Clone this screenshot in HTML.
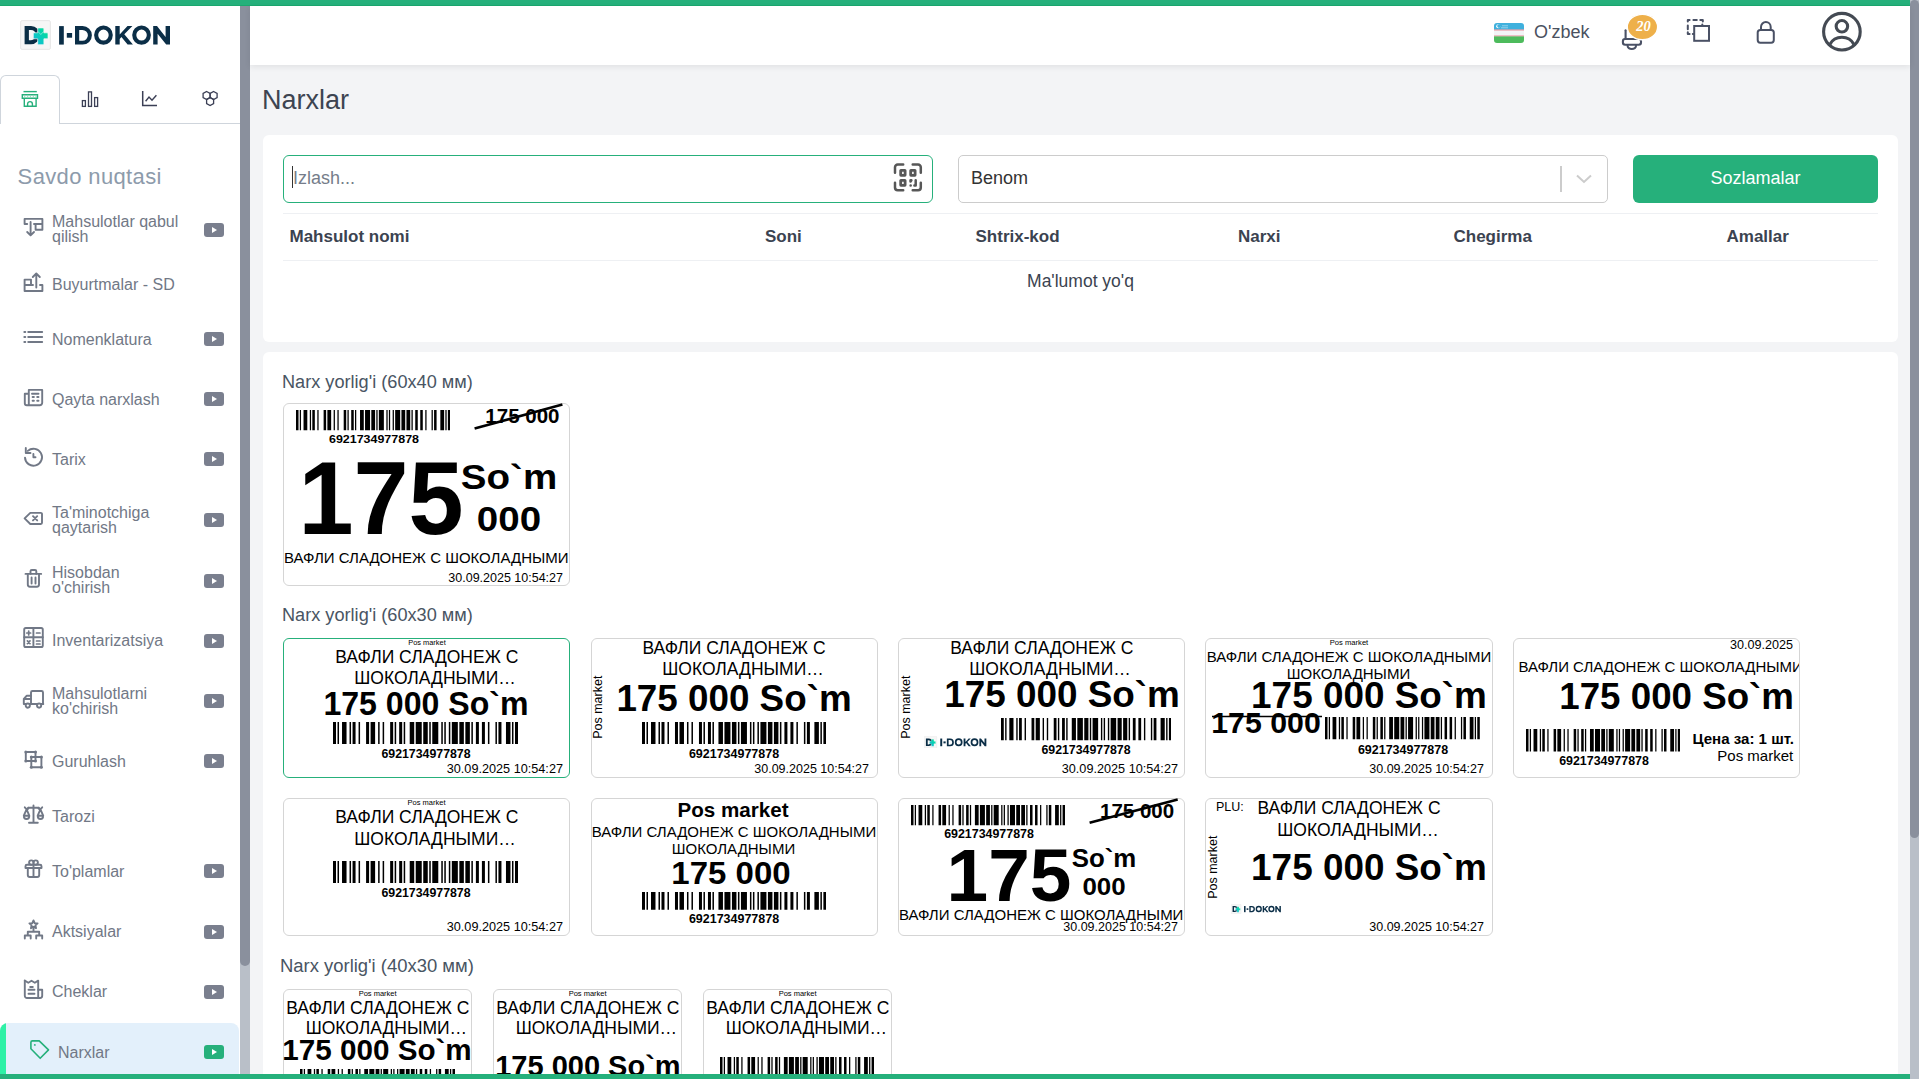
<!DOCTYPE html>
<html><head><meta charset="utf-8">
<style>
*{box-sizing:border-box;margin:0;padding:0}
html,body{width:1919px;height:1079px;overflow:hidden;background:#f3f4f6;font-family:"Liberation Sans",sans-serif}
.a{position:absolute}
.t{position:absolute;white-space:nowrap;line-height:1}
#topbar{left:0;top:0;width:1910px;height:6px;background:#25b07b;border-bottom:1px solid #1aa86e}
#botbar{left:0;top:1074px;width:1910px;height:5px;background:#25b07b;z-index:20}
#side{left:0;top:6px;width:240px;height:1073px;background:#fff;overflow:hidden}
#sscroll{left:240px;top:6px;width:10px;height:1073px;background:#b9bfc8}
#sthumb{left:240px;top:6px;width:10px;height:960px;background:#8a909d;border-radius:0 0 5px 5px}
#pscroll{left:1910px;top:0;width:9px;height:1079px;background:#b9bfc8}
#pthumb{left:1910px;top:0;width:9px;height:838px;background:#8a909d;border-radius:5px}
#header{left:250px;top:6px;width:1660px;height:59px;background:#fff;box-shadow:0 2px 6px rgba(0,0,0,.08);z-index:5}
.mi{position:absolute;left:0;width:240px;height:0}
.mi .ic{position:absolute;left:22px;width:22px;height:22px;top:-11px}
.mi .tx{position:absolute;left:52px;font-size:16px;line-height:15px;color:#717886;white-space:nowrap}
.mi .vd{position:absolute;left:204px;top:-7px;width:20px;height:14px;background:#7a7f8e;border-radius:3px}
.mi .vd:after{content:"";position:absolute;left:8px;top:4px;border-left:5px solid #fff;border-top:3px solid transparent;border-bottom:3px solid transparent}
.th{position:absolute;top:228px;font-size:17px;font-weight:700;color:#3b4350;white-space:nowrap;line-height:17px}

.stx{left:52px;font-size:16px;line-height:15px;color:#717886}
.sic{left:20px;width:28px;height:28px;fill:none;stroke:#717886;stroke-width:1.9;stroke-linecap:round;stroke-linejoin:round;z-index:2}
.vd{left:204px;width:20px;height:14px;background:#7a7f8e;border-radius:3px;z-index:2}
.vd:after{content:"";position:absolute;left:8px;top:4px;border-left:5px solid #fff;border-top:3px solid transparent;border-bottom:3px solid transparent}
.stx{z-index:2}
.tabic{width:18px;height:18px;fill:none;stroke:#3d4451;stroke-width:1.8;stroke-linecap:round;stroke-linejoin:round;z-index:2}

.lb{border-radius:6px;pointer-events:none}
.sect{font-size:18px;color:#495563}
#labels .t{color:#000}
#labels .t.sect{color:#495563}
</style></head><body>
<div id="topbar" class="a"></div>
<div id="botbar" class="a"></div>

<!-- SIDEBAR -->
<div id="side" class="a"></div>
<svg class="a" style="left:20px;top:20px;z-index:3" width="31" height="30" viewBox="0 0 31 30">
 <defs><linearGradient id="lg" x1="0" y1="1" x2="1" y2="0"><stop offset="0" stop-color="#0fb8e0"/><stop offset="1" stop-color="#05e391"/></linearGradient></defs>
 <rect x="0.6" y="0.6" width="29.8" height="28.8" rx="1.5" fill="#f6f6f6" stroke="#e4e4e4" stroke-width="0.9"/>
 <path d="M4.6 6H11A9.1 9.1 0 0 1 11 24.2H4.6z M8.9 10V20.2H11A5.1 5.1 0 0 0 11 10z" fill="#0a2d45" fill-rule="evenodd"/>
 <path d="M18.6 7.9H23a.9.9 0 0 1 .9.9V12.8H27.1a.9.9 0 0 1 .9.9V17.9a.9.9 0 0 1-.9.9H23.9V23.8a.9.9 0 0 1-.9.9H18.6a.9.9 0 0 1-.9-.9V18.8H14.2a.9.9 0 0 1-.9-.9V13.7a.9.9 0 0 1 .9-.9H17.7V8.8a.9.9 0 0 1 .9-.9z" fill="url(#lg)" stroke="#f6f6f6" stroke-width="0.7"/>
 <path d="M18 11.5l2.8 3 2.8-3" fill="none" stroke="#e8fff6" stroke-width="0.6" opacity=".8"/>
</svg>
<svg class="a" style="left:0;top:0;z-index:3" width="180" height="60" viewBox="0 0 180 60">
 <g fill="#0b2e47" fill-rule="evenodd">
  <rect x="59.1" y="26.1" width="4.7" height="18.5"/>
  <rect x="66.8" y="33" width="5.3" height="4.7"/>
  <path d="M75 26.1H82.6A9.3 9.25 0 0 1 82.6 44.6H75z M79.2 29.9V40.8H82.4A5.5 5.45 0 0 0 82.4 29.9z"/>
  <path d="M103.45 25.5a9.35 9.6 0 1 1 0 19.2a9.35 9.6 0 1 1 0-19.2z M103.45 29.6a5.25 5.5 0 1 0 0 11a5.25 5.5 0 1 0 0-11z"/>
  <path d="M115.3 26.1H119.7V34.6L127.5 26.1H132.4L124.3 34.3L132.9 44.6H127.6L121.4 37.1L119.7 38.9V44.6H115.3z"/>
  <path d="M141.55 25.5a9.35 9.6 0 1 1 0 19.2a9.35 9.6 0 1 1 0-19.2z M141.55 29.6a5.25 5.5 0 1 0 0 11a5.25 5.5 0 1 0 0-11z"/>
  <path d="M153.2 26.1H157L165.6 37V26.1H170V44.6H166.2L157.6 33.7V44.6H153.2z"/>
 </g>
</svg>
<!-- tabs -->
<div class="a" style="left:0;top:75px;width:60px;height:49px;border:1px solid #cfd5dc;border-bottom:none;border-radius:6px 6px 0 0;background:#fff;z-index:2"></div>
<div class="a" style="left:59px;top:123px;width:181px;height:1px;background:#cfd5dc;z-index:2"></div>
<svg class="a" style="left:0;top:0;z-index:3" width="240" height="124" viewBox="0 0 240 124" fill="none" stroke-linecap="butt" stroke-linejoin="miter">
 <g stroke="#26b07b" stroke-width="1.4">
  <path d="M23.5 91.6H36.8"/>
  <path d="M22.3 94.8H37.5V98.2H22.3z" />
  <path d="M24.7 94.9v3.2M27.7 94.9v3.2M30.4 94.9v3.2M33.3 94.9v3.2M36 94.9v3.2" stroke-width="0.9" stroke="#8fd6b8"/>
  <path d="M24.3 98.3V106.3H36.1V98.3M27.6 106.3V104a2.4 2.4 0 0 1 4.8 0V106.3"/>
 </g>
 <g stroke="#3b3f55" stroke-width="1.3">
  <rect x="82.4" y="100.6" width="3" height="5.8"/>
  <rect x="88.5" y="91.9" width="3" height="14.5"/>
  <rect x="94.6" y="97.6" width="3" height="8.8"/>
 </g>
 <g stroke="#3b3f55" stroke-width="1.5">
  <path d="M142.7 91V105.5H157"/>
  <path d="M145.6 101.2L149 97 152 100.3 156.4 95.2" stroke-width="1.4"/>
 </g>
 <g stroke="#3b3f55" stroke-width="1.3">
  <path d="M206.6 91.5l3.5 2v4l-3.5 2-3.5-2v-4z"/>
  <path d="M213.6 91.5l3.5 2v4l-3.5 2-3.5-2v-4z"/>
  <path d="M210.1 97.5l3.5 2v4l-3.5 2-3.5-2v-4z"/>
 </g>
</svg>
<div class="t" style="left:17.6px;top:166px;font-size:22px;letter-spacing:0.37px;color:#8d9bab;z-index:2">Savdo nuqtasi</div>
<div class="t stx" style="top:214.3px">Mahsulotlar qabul<br>qilish</div>
<div class="a vd" style="top:222.6px"></div>
<div class="t stx" style="top:277.0px">Buyurtmalar - SD</div>
<div class="t stx" style="top:331.7px">Nomenklatura</div>
<div class="a vd" style="top:332.1px"></div>
<div class="t stx" style="top:392.0px">Qayta narxlash</div>
<div class="a vd" style="top:392.4px"></div>
<div class="t stx" style="top:452.0px">Tarix</div>
<div class="a vd" style="top:452.4px"></div>
<div class="t stx" style="top:504.8px">Ta'minotchiga<br>qaytarish</div>
<div class="a vd" style="top:513.1px"></div>
<div class="t stx" style="top:565.3px">Hisobdan<br>o'chirish</div>
<div class="a vd" style="top:573.6px"></div>
<div class="t stx" style="top:633.2px">Inventarizatsiya</div>
<div class="a vd" style="top:633.6px"></div>
<div class="t stx" style="top:685.8px">Mahsulotlarni<br>ko'chirish</div>
<div class="a vd" style="top:694.1px"></div>
<div class="t stx" style="top:753.7px">Guruhlash</div>
<div class="a vd" style="top:754.1px"></div>
<div class="t stx" style="top:808.6px">Tarozi</div>
<div class="t stx" style="top:863.7px">To'plamlar</div>
<div class="a vd" style="top:864.1px"></div>
<div class="t stx" style="top:924.2px">Aktsiyalar</div>
<div class="a vd" style="top:924.6px"></div>
<div class="t stx" style="top:984.1px">Cheklar</div>
<div class="a vd" style="top:984.5px"></div>
<svg class="a sic" style="top:212px" viewBox="0 0 28 28"><path d="M7.2 12H4.6V6.9H22.4V17.8H15.6V12M14 12H22.4"/><path d="M10.6 10V23.3M7.2 20L10.6 23.4L14 20"/></svg>
<svg class="a sic" style="top:270px" viewBox="0 0 28 28"><path d="M11 15V9.6H4.6V21H22.4V15H20M4.6 15H13"/><path d="M16.3 17.5V3.8M12.8 7L16.3 3.5L19.8 7"/></svg>
<svg class="a sic" style="top:322px" viewBox="0 0 28 28"><path d="M8.2 10H22.2M8.2 15H22.2M8.2 20H22.2"/><path d="M4.3 10H5.3M4.3 15H5.3M4.3 20H5.3"/></svg>
<svg class="a sic" style="top:383px" viewBox="0 0 28 28"><path d="M8.8 6.9H22.2V19.8A2.4 2.4 0 0 1 19.8 22.2H6.8A2 2 0 0 1 4.8 20.2V10.8H8.8M8.8 6.9V22.2"/><path d="M12 10.8H18.5M12.6 14H13.9M17.2 14H18.5M12.6 17.8H13.9M17.2 17.8H18.5"/></svg>
<svg class="a sic" style="top:443px" viewBox="0 0 28 28"><path d="M5 14.6A8.5 8.5 0 1 0 7.8 7.9"/><path d="M5.8 5V10H10.5"/><path d="M13.4 11V14.2H15.5"/></svg>
<svg class="a sic" style="top:504px" viewBox="0 0 28 28"><path d="M10.3 8.9H20.8A1.2 1.2 0 0 1 22 10.1V18.8A1.2 1.2 0 0 1 20.8 20H10.3L4.6 14.4Z"/><path d="M13 12.2L17.2 16.4M17.2 12.2L13 16.4"/></svg>
<svg class="a sic" style="top:564px" viewBox="0 0 28 28"><path d="M5.5 9.9H21.2"/><path d="M7.8 9.9V20.6A2.2 2.2 0 0 0 10 22.8H16.8A2.2 2.2 0 0 0 19 20.6V9.9"/><path d="M10.5 9.9V7.3A1.3 1.3 0 0 1 11.8 6H15A1.3 1.3 0 0 1 16.3 7.3V9.9"/><path d="M11.6 13.5V19.5M15.5 13.5V19.5"/></svg>
<svg class="a sic" style="top:624px" viewBox="0 0 28 28"><rect x="4.2" y="4" width="18.6" height="19" rx="1.6"/><path d="M13.4 4V23M4.2 13.2H22.8"/><path d="M6.8 9H10.6M8.7 7.1V10.9M16.5 9H20M7.4 16.9L10 19.7M10 16.9L7.4 19.7M16.5 17H20M16.5 20H20" stroke-width="1.7"/></svg>
<svg class="a sic" style="top:685px" viewBox="0 0 28 28"><path d="M11 19V7.5A1.5 1.5 0 0 1 12.5 6H21.5A1.5 1.5 0 0 1 23 7.5V19"/><path d="M10.8 10.7H6.8L3.8 14V19H5.6M10 19H16.9M21.3 19H23.3M4.2 14H10.8"/><circle cx="7.8" cy="20.6" r="2.1"/><circle cx="19.1" cy="20.6" r="2.1"/></svg>
<svg class="a sic" style="top:745px" viewBox="0 0 28 28"><path d="M5.8 7H15.5V16H5.8Z"/><path d="M11.3 12H21.4V22.3H11.3Z"/><g fill="#717886" stroke="none"><circle cx="5.8" cy="7" r="1.5"/><circle cx="15.5" cy="7" r="1.5"/><circle cx="5.8" cy="16" r="1.5"/><circle cx="15.5" cy="16" r="1.5"/><circle cx="11.3" cy="12" r="1.5"/><circle cx="21.4" cy="12" r="1.5"/><circle cx="11.3" cy="22.3" r="1.5"/><circle cx="21.4" cy="22.3" r="1.5"/></g></svg>
<svg class="a sic" style="top:800px" viewBox="0 0 28 28"><path d="M9 22.8H17.8M13.5 5.5V22.8M7.2 9.5L9 7.8H17.8L19.8 9.5"/><path d="M4.8 7.3L6.6 9.3L8.3 7.6M6.6 9.3L3.8 15.7H9.3Z M3.8 15.7A2.75 3.3 0 0 0 9.3 15.7"/><path d="M22.2 7.3L20.4 9.3L18.7 7.6M20.4 9.3L23.2 15.7H17.7Z M23.2 15.7A2.75 3.3 0 0 1 17.7 15.7"/></svg>
<svg class="a sic" style="top:855px" viewBox="0 0 28 28"><path d="M5.5 11.3A1.5 1.5 0 0 1 7 9.8H20A1.5 1.5 0 0 1 21.5 11.3V13H5.5Z"/><path d="M7.8 13V20A2 2 0 0 0 9.8 22H17.2A2 2 0 0 0 19.2 20V13"/><path d="M13.5 6.2V22"/><path d="M13.5 9.8V7.6A2.2 2.2 0 1 0 11.3 9.8M13.5 7.6A2.2 2.2 0 1 1 15.7 9.8"/></svg>
<svg class="a sic" style="top:915px" viewBox="0 0 28 28"><path d="M13.50 5.40L14.68 8.08L17.59 8.37L15.40 10.32L16.03 13.18L13.50 11.70L10.97 13.18L11.60 10.32L9.41 8.37L12.32 8.08Z"/><path d="M13.5 13.3V16.8M7.8 20.5V16.8H19.2V20.5M4.8 23.5V20.5H10.7V23.5M16.2 23.5V20.5H22.2V23.5"/></svg>
<svg class="a sic" style="top:975px" viewBox="0 0 28 28"><path d="M4.8 5.6V20.8A2.2 2.2 0 0 0 7 23H20A2.2 2.2 0 0 0 22.2 20.8V14.8H18.2"/><path d="M18.2 23V5.6L14.8 7.7L11.5 5.8L8.3 7.7L4.8 5.6"/><path d="M10.2 12H12.8M8.5 14.8H14.5M8.5 18.8H14.5"/></svg>
<svg class="a sic" style="left:26px;top:1036px;stroke:#26b07b;z-index:3" viewBox="0 0 28 28"><path d="M6.4 4.9H13.2L22.5 13.9L14.2 22.3L4.9 12.7V6.4A1.5 1.5 0 0 1 6.4 4.9Z" stroke-width="1.6"/><circle cx="8.8" cy="8.9" r=".35" fill="#26b07b" stroke-width="1.2"/></svg>
<!-- active -->
<div class="a" style="left:0;top:1022.5px;width:239px;height:60px;background:#e3f0fb;border-radius:8px 8px 0 0;z-index:2;overflow:hidden"><div class="a" style="left:0;top:0;width:6px;height:60px;background:#2ef1a6"></div></div>
<div class="t stx" style="left:58px;top:1044.9px;z-index:3">Narxlar</div>
<div class="a vd" style="top:1045.3px;background:#26b07b;z-index:3"></div>

<div id="sscroll" class="a"></div>
<div id="sthumb" class="a"></div>

<!-- HEADER -->
<div id="header" class="a"></div>
<svg class="a" style="left:1494px;top:22.8px;z-index:6" width="30" height="20" viewBox="0 0 30 20">
 <defs><clipPath id="fc"><rect width="30" height="20" rx="3"/></clipPath></defs>
 <g clip-path="url(#fc)">
 <rect width="30" height="20" fill="#f2f4f6"/>
 <rect width="30" height="6.6" fill="#3fb0dd"/>
 <rect y="6.6" width="30" height="0.8" fill="#e66e7a"/>
 <rect y="12.6" width="30" height="0.8" fill="#e66e7a"/>
 <rect y="13.4" width="30" height="6.6" fill="#4dbb5c"/>
 <circle cx="4.2" cy="3.3" r="2" fill="#fff"/><circle cx="5" cy="3.1" r="1.8" fill="#3fb0dd"/>
 <path d="M8 2.8h6M7 4.8h7" stroke="#cfeaf6" stroke-width="0.6"/>
 </g>
</svg>
<div class="t" style="left:1534px;top:22.6px;font-size:18px;color:#4a5160;z-index:6">O'zbek</div>
<svg class="a" style="left:0;top:0;z-index:6" width="1919" height="65" viewBox="0 0 1919 65" fill="none" stroke-linecap="round" stroke-linejoin="round">
 <g stroke="#4a5165" stroke-width="2.1">
  <path d="M1625.6 30.2V38.6"/>
  <rect x="1622.9" y="39" width="18.1" height="5.7" rx="2.2"/>
  <path d="M1627.6 45.8a4.2 3.2 0 0 0 8.4 0"/>
 </g>
 <ellipse cx="1642.45" cy="27.05" rx="15.2" ry="12.7" fill="#eeb04a" stroke="#fff" stroke-width="1.4"/>
 <text x="1643.5" y="31" text-anchor="middle" font-family="Liberation Serif" font-weight="700" font-style="italic" font-size="14.5" fill="#fff" stroke="none">20</text>
 <g stroke="#4a5165" stroke-width="2">
  <path d="M1687.8 21.6V20H1689.6M1693.4 20H1696.8M1700.3 20H1702.8V21.6M1687.8 25.4V29.2M1687.8 32.3V34H1689.6M1692.8 34H1693.6M1702.3 24.5V25.5"/>
  <rect x="1694.2" y="26" width="14.8" height="14.8" stroke-linejoin="miter"/>
 </g>
 <g stroke="#4a5165" stroke-width="2">
  <rect x="1757.7" y="30" width="16.1" height="12.7" rx="2.6"/>
  <path d="M1761 30V26.9A4.85 4.85 0 0 1 1770.7 26.9V30"/>
 </g>
 <g stroke="#444a53" stroke-width="3.1">
  <circle cx="1841.9" cy="31.7" r="18.3"/>
  <circle cx="1841.9" cy="26.3" r="5.75"/>
  <path d="M1829.8 44.5A13.76 13.76 0 0 1 1854 44.5"/>
 </g>
</svg>
<div id="main">
<div class="t" style="left:262px;top:86.7px;font-size:27px;color:#3d4451">Narxlar</div>
<div class="a" style="left:263px;top:135px;width:1635px;height:207px;background:#fff;border-radius:6px"></div>
<div class="a" style="left:283px;top:155px;width:650px;height:48px;border:1.5px solid #26b07b;border-radius:6px;background:#fff"></div>
<div class="a" style="left:292px;top:166px;width:1.3px;height:22px;background:#333"></div>
<div class="t" style="left:293px;top:169px;font-size:18px;color:#757d8a">Izlash...</div>
<svg class="a" style="left:890px;top:160px" width="36" height="36" viewBox="0 0 36 36" fill="none" stroke="#575757" stroke-width="2.5" stroke-linecap="round" stroke-linejoin="round">
 <path d="M5 12.7V7.2A2.7 2.7 0 0 1 7.7 4.5H13.2M22.7 4.5H28.1A2.7 2.7 0 0 1 30.8 7.2V12.7M5 22.7V27.6A2.7 2.7 0 0 0 7.7 30.3H13.2M22.7 30.3H28.1A2.7 2.7 0 0 0 30.8 27.6V22.7"/>
 <rect x="10.7" y="10.4" width="4.4" height="4.9" rx=".2" stroke-width="2.8"/>
 <rect x="20.7" y="10.4" width="4.4" height="4.9" rx=".2" stroke-width="2.8"/>
 <rect x="10.7" y="20.4" width="4.4" height="4.9" rx=".2" stroke-width="2.8"/>
 <path d="M20.5 20.3V21.6L21.4 20.3M20.6 25.4h.1M25.7 20.3V25.5H24.4"/>
</svg>
<div class="a" style="left:958px;top:155px;width:650px;height:48px;border:1px solid #cccccc;border-radius:5px;background:#fff"></div>
<div class="t" style="left:971px;top:168.8px;font-size:18px;color:#333">Benom</div>
<div class="a" style="left:1560px;top:166px;width:1.5px;height:26px;background:#ccc"></div>
<svg class="a" style="left:1575px;top:172px" width="18" height="14" viewBox="0 0 18 14" fill="none" stroke="#cccccc" stroke-width="2"><path d="M2 3.5l7 6.5 7-6.5"/></svg>
<div class="a" style="left:1633px;top:155px;width:245px;height:48px;background:#26b07b;border-radius:6px"></div>
<div class="t" style="left:1633px;top:168.6px;width:245px;text-align:center;font-size:18px;color:#fff">Sozlamalar</div>
<div class="a" style="left:283px;top:213px;width:1595px;height:1px;background:#eef0f3"></div>
<div class="th" style="left:289.5px">Mahsulot nomi</div>
<div class="th" style="left:765px">Soni</div>
<div class="th" style="left:975.5px">Shtrix-kod</div>
<div class="th" style="left:1238px">Narxi</div>
<div class="th" style="left:1453.5px">Chegirma</div>
<div class="th" style="left:1726.5px">Amallar</div>
<div class="a" style="left:283px;top:259.5px;width:1595px;height:1.5px;background:#eef0f3"></div>
<div class="t" style="left:283px;top:272.8px;width:1595px;text-align:center;font-size:17.5px;color:#3b4350">Ma'lumot yo'q</div>
<div class="a" style="left:263px;top:352px;width:1635px;height:730px;background:#fff;border-radius:6px"></div>
<div id="labels"><div class="t" style="left:281.50px;top:372.76px;font-size:18px;font-weight:400;transform:scale(1.0081,1.0000);transform-origin:0 15.24px;color:#495563">Narx yorlig'i (60x40 мм)</div>
<div class="t" style="left:281.50px;top:606.46px;font-size:18px;font-weight:400;transform:scale(1.0082,1.0000);transform-origin:0 15.24px;color:#495563">Narx yorlig'i (60x30 мм)</div>
<div class="t" style="left:279.50px;top:957.16px;font-size:18px;font-weight:400;transform:scale(1.0242,1.0000);transform-origin:0 15.24px;color:#495563">Narx yorlig'i (40x30 мм)</div>
<div class="a lb" style="left:283px;top:403px;width:287px;height:183px;border:1px solid #d5d5d5"></div>
<svg class="a" style="left:296.0px;top:410.4px" width="154.4" height="20.2" viewBox="0 0 123 1" preserveAspectRatio="none"><path d="M0 0h2v1h-2zM3 0h1v1h-1zM6 0h3v1h-3zM11 0h1v1h-1zM13 0h2v1h-2zM17 0h1v1h-1zM22 0h2v1h-2zM25 0h3v1h-3zM30 0h1v1h-1zM33 0h1v1h-1zM38 0h2v1h-2zM41 0h1v1h-1zM44 0h2v1h-2zM47 0h1v1h-1zM51 0h3v1h-3zM55 0h4v1h-4zM60 0h3v1h-3zM64 0h1v1h-1zM66 0h4v1h-4zM72 0h1v1h-1zM74 0h1v1h-1zM77 0h1v1h-1zM79 0h4v1h-4zM84 0h3v1h-3zM88 0h3v1h-3zM92 0h1v1h-1zM95 0h2v1h-2zM99 0h2v1h-2zM103 0h1v1h-1zM108 0h1v1h-1zM110 0h2v1h-2zM115 0h3v1h-3zM119 0h1v1h-1zM121 0h2v1h-2z" fill="#000"/></svg>
<div class="t" style="left:73.60px;width:600px;text-align:center;top:433.82px;font-size:11.2px;font-weight:700;transform:scale(1.1127,0.9300);transform-origin:50% 9.48px;">6921734977878</div>
<div class="t" style="left:222.40px;width:600px;text-align:center;top:405.55px;font-size:20.5px;font-weight:700;">175 000</div>
<svg class="a" style="left:0;top:0;overflow:visible" width="1" height="1"><line x1="474.6" y1="428.5" x2="562.4" y2="404.5" stroke="#000" stroke-width="2.6"/></svg>
<div class="t" style="left:80.55px;width:600px;text-align:center;top:451.24px;font-size:98px;font-weight:700;transform:scale(1.0098,1.0508);transform-origin:50% 82.96px;">175</div>
<div class="t" style="left:209.40px;width:600px;text-align:center;top:459.10px;font-size:36.5px;font-weight:700;transform:scale(1.0571,0.9821);transform-origin:50% 30.90px;">So`m</div>
<div class="t" style="left:208.60px;width:600px;text-align:center;top:500.73px;font-size:36px;font-weight:700;transform:scale(1.0706,0.9831);transform-origin:50% 30.47px;">000</div>
<div class="t" style="left:126.30px;width:600px;text-align:center;top:550.10px;font-size:15px;font-weight:400;">ВАФЛИ СЛАДОНЕЖ С ШОКОЛАДНЫМИ</div>
<div class="t" style="left:-37.00px;width:600px;text-align:right;top:571.62px;font-size:12.5px;font-weight:400;transform:scale(1.0000,1.0811);transform-origin:100% 10.58px;">30.09.2025 10:54:27</div>
<div class="a lb" style="left:283px;top:637.5px;width:287px;height:140px;border:1.5px solid #26b07b"></div>
<div class="t" style="left:126.75px;width:600px;text-align:center;top:639.45px;font-size:7.5px;font-weight:400;transform:scale(0.9869,1.0000);transform-origin:50% 6.35px;">Pos market</div>
<div class="t" style="left:126.80px;width:600px;text-align:center;top:648.59px;font-size:17.5px;font-weight:400;">ВАФЛИ СЛАДОНЕЖ С</div>
<div class="t" style="left:135.00px;width:600px;text-align:center;top:669.89px;font-size:17.5px;font-weight:400;">ШОКОЛАДНЫМИ…</div>
<div class="t" style="left:125.75px;width:600px;text-align:center;top:687.69px;font-size:32.5px;font-weight:700;transform:scale(0.9877,1.0000);transform-origin:50% 27.51px;">175 000 So`m</div>
<svg class="a" style="left:333.2px;top:722.2px" width="185.0" height="22.2" viewBox="0 0 123 1" preserveAspectRatio="none"><path d="M0 0h2v1h-2zM3 0h1v1h-1zM6 0h3v1h-3zM11 0h1v1h-1zM13 0h2v1h-2zM17 0h1v1h-1zM22 0h2v1h-2zM25 0h3v1h-3zM30 0h1v1h-1zM33 0h1v1h-1zM38 0h2v1h-2zM41 0h1v1h-1zM44 0h2v1h-2zM47 0h1v1h-1zM51 0h3v1h-3zM55 0h4v1h-4zM60 0h3v1h-3zM64 0h1v1h-1zM66 0h4v1h-4zM72 0h1v1h-1zM74 0h1v1h-1zM77 0h1v1h-1zM79 0h4v1h-4zM84 0h3v1h-3zM88 0h3v1h-3zM92 0h1v1h-1zM95 0h2v1h-2zM99 0h2v1h-2zM103 0h1v1h-1zM108 0h1v1h-1zM110 0h2v1h-2zM115 0h3v1h-3zM119 0h1v1h-1zM121 0h2v1h-2z" fill="#000"/></svg>
<div class="t" style="left:126.00px;width:600px;text-align:center;top:748.27px;font-size:12.2px;font-weight:700;transform:scale(1.0116,1.0000);transform-origin:50% 10.33px;">6921734977878</div>
<div class="t" style="left:-36.80px;width:600px;text-align:right;top:763.42px;font-size:12.5px;font-weight:400;transform:scale(1.0137,1.0347);transform-origin:100% 10.58px;">30.09.2025 10:54:27</div>
<div class="a lb" style="left:590.5px;top:637.5px;width:287px;height:140px;border:1px solid #d5d5d5"></div>
<div class="t" style="left:497.6px;width:200px;text-align:center;top:700.8px;font-size:12.5px;line-height:12.5px;transform:rotate(-90deg)">Pos market</div>
<div class="t" style="left:434.00px;width:600px;text-align:center;top:639.69px;font-size:17.5px;font-weight:400;">ВАФЛИ СЛАДОНЕЖ С</div>
<div class="t" style="left:443.00px;width:600px;text-align:center;top:661.29px;font-size:17.5px;font-weight:400;">ШОКОЛАДНЫМИ…</div>
<div class="t" style="left:434.00px;width:600px;text-align:center;top:680.53px;font-size:36px;font-weight:700;transform:scale(1.0221,1.0000);transform-origin:50% 30.47px;">175 000 So`m</div>
<svg class="a" style="left:641.5px;top:722.2px" width="184.4" height="22.2" viewBox="0 0 123 1" preserveAspectRatio="none"><path d="M0 0h2v1h-2zM3 0h1v1h-1zM6 0h3v1h-3zM11 0h1v1h-1zM13 0h2v1h-2zM17 0h1v1h-1zM22 0h2v1h-2zM25 0h3v1h-3zM30 0h1v1h-1zM33 0h1v1h-1zM38 0h2v1h-2zM41 0h1v1h-1zM44 0h2v1h-2zM47 0h1v1h-1zM51 0h3v1h-3zM55 0h4v1h-4zM60 0h3v1h-3zM64 0h1v1h-1zM66 0h4v1h-4zM72 0h1v1h-1zM74 0h1v1h-1zM77 0h1v1h-1zM79 0h4v1h-4zM84 0h3v1h-3zM88 0h3v1h-3zM92 0h1v1h-1zM95 0h2v1h-2zM99 0h2v1h-2zM103 0h1v1h-1zM108 0h1v1h-1zM110 0h2v1h-2zM115 0h3v1h-3zM119 0h1v1h-1zM121 0h2v1h-2z" fill="#000"/></svg>
<div class="t" style="left:434.30px;width:600px;text-align:center;top:748.27px;font-size:12.2px;font-weight:700;transform:scale(1.0232,1.0000);transform-origin:50% 10.33px;">6921734977878</div>
<div class="t" style="left:269.40px;width:600px;text-align:right;top:763.42px;font-size:12.5px;font-weight:400;transform:scale(1.0001,1.0347);transform-origin:100% 10.58px;">30.09.2025 10:54:27</div>
<div class="a lb" style="left:898px;top:637.5px;width:287px;height:140px;border:1px solid #d5d5d5"></div>
<div class="t" style="left:805.5px;width:200px;text-align:center;top:700.8px;font-size:12.5px;line-height:12.5px;transform:rotate(-90deg)">Pos market</div>
<div class="t" style="left:741.80px;width:600px;text-align:center;top:639.69px;font-size:17.5px;font-weight:400;">ВАФЛИ СЛАДОНЕЖ С</div>
<div class="t" style="left:750.00px;width:600px;text-align:center;top:661.29px;font-size:17.5px;font-weight:400;">ШОКОЛАДНЫМИ…</div>
<div class="t" style="left:761.95px;width:600px;text-align:center;top:676.73px;font-size:36px;font-weight:700;transform:scale(1.0242,1.0000);transform-origin:50% 30.47px;">175 000 So`m</div>
<svg class="a" style="left:924.00px;top:735.55px" width="62.77" height="12.47" viewBox="20 20 151 30"><rect x="20.6" y="20.6" width="29.8" height="28.8" rx="1.5" fill="#f6f6f6" stroke="#e4e4e4" stroke-width="0.9"/><path d="M24.6 26H31A9.1 9.1 0 0 1 31 44.2H24.6z M28.9 30V40.2H31A5.1 5.1 0 0 0 31 30z" fill="#0a2d45" fill-rule="evenodd"/><path d="M38.6 27.9H43a.9.9 0 0 1 .9.9V32.8H47.1a.9.9 0 0 1 .9.9V37.9a.9.9 0 0 1-.9.9H43.9V43.8a.9.9 0 0 1-.9.9H38.6a.9.9 0 0 1-.9-.9V38.8H34.2a.9.9 0 0 1-.9-.9V33.7a.9.9 0 0 1 .9-.9H37.7V28.8a.9.9 0 0 1 .9-.9z" fill="url(#lg)" stroke="#f6f6f6" stroke-width="0.7"/><g fill="#0b2e47" fill-rule="evenodd"><rect x="59.1" y="26.1" width="4.7" height="18.5"/><rect x="66.8" y="33" width="5.3" height="4.7"/><path d="M75 26.1H82.6A9.3 9.25 0 0 1 82.6 44.6H75z M79.2 29.9V40.8H82.4A5.5 5.45 0 0 0 82.4 29.9z"/><path d="M103.45 25.5a9.35 9.6 0 1 1 0 19.2a9.35 9.6 0 1 1 0-19.2z M103.45 29.6a5.25 5.5 0 1 0 0 11a5.25 5.5 0 1 0 0-11z"/><path d="M115.3 26.1H119.7V34.6L127.5 26.1H132.4L124.3 34.3L132.9 44.6H127.6L121.4 37.1L119.7 38.9V44.6H115.3z"/><path d="M141.55 25.5a9.35 9.6 0 1 1 0 19.2a9.35 9.6 0 1 1 0-19.2z M141.55 29.6a5.25 5.5 0 1 0 0 11a5.25 5.5 0 1 0 0-11z"/><path d="M153.2 26.1H157L165.6 37V26.1H170V44.6H166.2L157.6 33.7V44.6H153.2z"/></g></svg>
<svg class="a" style="left:1000.6px;top:718.4px" width="170.7" height="22.2" viewBox="0 0 123 1" preserveAspectRatio="none"><path d="M0 0h2v1h-2zM3 0h1v1h-1zM6 0h3v1h-3zM11 0h1v1h-1zM13 0h2v1h-2zM17 0h1v1h-1zM22 0h2v1h-2zM25 0h3v1h-3zM30 0h1v1h-1zM33 0h1v1h-1zM38 0h2v1h-2zM41 0h1v1h-1zM44 0h2v1h-2zM47 0h1v1h-1zM51 0h3v1h-3zM55 0h4v1h-4zM60 0h3v1h-3zM64 0h1v1h-1zM66 0h4v1h-4zM72 0h1v1h-1zM74 0h1v1h-1zM77 0h1v1h-1zM79 0h4v1h-4zM84 0h3v1h-3zM88 0h3v1h-3zM92 0h1v1h-1zM95 0h2v1h-2zM99 0h2v1h-2zM103 0h1v1h-1zM108 0h1v1h-1zM110 0h2v1h-2zM115 0h3v1h-3zM119 0h1v1h-1zM121 0h2v1h-2z" fill="#000"/></svg>
<div class="t" style="left:786.30px;width:600px;text-align:center;top:744.27px;font-size:12.2px;font-weight:700;transform:scale(1.0118,1.0000);transform-origin:50% 10.33px;">6921734977878</div>
<div class="t" style="left:578.20px;width:600px;text-align:right;top:763.42px;font-size:12.5px;font-weight:400;transform:scale(1.0137,1.0347);transform-origin:100% 10.58px;">30.09.2025 10:54:27</div>
<div class="a lb" style="left:1205px;top:637.5px;width:288px;height:140px;border:1px solid #d5d5d5"></div>
<div class="t" style="left:1049.15px;width:600px;text-align:center;top:639.45px;font-size:7.5px;font-weight:400;transform:scale(1.0138,1.0000);transform-origin:50% 6.35px;">Pos market</div>
<div class="t" style="left:1049.00px;width:600px;text-align:center;top:648.50px;font-size:15px;font-weight:400;">ВАФЛИ СЛАДОНЕЖ С ШОКОЛАДНЫМИ</div>
<div class="t" style="left:1048.50px;width:600px;text-align:center;top:665.60px;font-size:15px;font-weight:400;">ШОКОЛАДНЫМИ</div>
<div class="t" style="left:1069.45px;width:600px;text-align:center;top:678.33px;font-size:36px;font-weight:700;transform:scale(1.0244,1.0000);transform-origin:50% 30.47px;">175 000 So`m</div>
<div class="t" style="left:966.15px;width:600px;text-align:center;top:708.85px;font-size:29px;font-weight:700;transform:scale(1.0441,1.0000);transform-origin:50% 24.55px;">175 000</div>
<svg class="a" style="left:0;top:0;overflow:visible" width="1" height="1"><line x1="1212" y1="716.5" x2="1322" y2="716.5" stroke="#000" stroke-width="1.5"/></svg>
<svg class="a" style="left:1324.8px;top:717.4px" width="154.8" height="22.3" viewBox="0 0 123 1" preserveAspectRatio="none"><path d="M0 0h2v1h-2zM3 0h1v1h-1zM6 0h3v1h-3zM11 0h1v1h-1zM13 0h2v1h-2zM17 0h1v1h-1zM22 0h2v1h-2zM25 0h3v1h-3zM30 0h1v1h-1zM33 0h1v1h-1zM38 0h2v1h-2zM41 0h1v1h-1zM44 0h2v1h-2zM47 0h1v1h-1zM51 0h3v1h-3zM55 0h4v1h-4zM60 0h3v1h-3zM64 0h1v1h-1zM66 0h4v1h-4zM72 0h1v1h-1zM74 0h1v1h-1zM77 0h1v1h-1zM79 0h4v1h-4zM84 0h3v1h-3zM88 0h3v1h-3zM92 0h1v1h-1zM95 0h2v1h-2zM99 0h2v1h-2zM103 0h1v1h-1zM108 0h1v1h-1zM110 0h2v1h-2zM115 0h3v1h-3zM119 0h1v1h-1zM121 0h2v1h-2z" fill="#000"/></svg>
<div class="t" style="left:1102.70px;width:600px;text-align:center;top:744.27px;font-size:12.2px;font-weight:700;transform:scale(1.0232,1.0000);transform-origin:50% 10.33px;">6921734977878</div>
<div class="t" style="left:884.40px;width:600px;text-align:right;top:763.42px;font-size:12.5px;font-weight:400;transform:scale(1.0001,1.0347);transform-origin:100% 10.58px;">30.09.2025 10:54:27</div>
<div class="a" style="left:1513px;top:637.5px;width:287px;height:140px;overflow:hidden">
<div class="t" style="left:-319.60px;width:600px;text-align:right;top:0.10px;font-size:13px;font-weight:400;transform:scale(0.9690,1.0000);transform-origin:100% 11.00px;">30.09.2025</div>
<div class="t" style="left:5.40px;top:21.80px;font-size:15px;font-weight:400;">ВАФЛИ СЛАДОНЕЖ С ШОКОЛАДНЫМИ</div>
<div class="t" style="left:-318.80px;width:600px;text-align:right;top:41.23px;font-size:36px;font-weight:700;transform:scale(1.0199,1.0000);transform-origin:100% 30.47px;">175 000 So`m</div>
<svg class="a" style="left:12.80px;top:91.90px" width="154.3" height="22.6" viewBox="0 0 123 1" preserveAspectRatio="none"><path d="M0 0h2v1h-2zM3 0h1v1h-1zM6 0h3v1h-3zM11 0h1v1h-1zM13 0h2v1h-2zM17 0h1v1h-1zM22 0h2v1h-2zM25 0h3v1h-3zM30 0h1v1h-1zM33 0h1v1h-1zM38 0h2v1h-2zM41 0h1v1h-1zM44 0h2v1h-2zM47 0h1v1h-1zM51 0h3v1h-3zM55 0h4v1h-4zM60 0h3v1h-3zM64 0h1v1h-1zM66 0h4v1h-4zM72 0h1v1h-1zM74 0h1v1h-1zM77 0h1v1h-1zM79 0h4v1h-4zM84 0h3v1h-3zM88 0h3v1h-3zM92 0h1v1h-1zM95 0h2v1h-2zM99 0h2v1h-2zM103 0h1v1h-1zM108 0h1v1h-1zM110 0h2v1h-2zM115 0h3v1h-3zM119 0h1v1h-1zM121 0h2v1h-2z" fill="#000"/></svg>
<div class="t" style="left:-209.15px;width:600px;text-align:center;top:117.17px;font-size:12.2px;font-weight:700;transform:scale(1.0173,1.0000);transform-origin:50% 10.33px;">6921734977878</div>
<div class="t" style="left:-318.80px;width:600px;text-align:right;top:93.70px;font-size:15px;font-weight:700;transform:scale(1.0050,1.0000);transform-origin:100% 12.70px;">Цена за: 1 шт.</div>
<div class="t" style="left:-319.80px;width:600px;text-align:right;top:110.40px;font-size:15px;font-weight:400;">Pos market</div>
</div>
<div class="a lb" style="left:1513px;top:637.5px;width:287px;height:140px;border:1px solid #d5d5d5"></div>
<div class="a lb" style="left:283px;top:798.3px;width:287px;height:137.5px;border:1px solid #d5d5d5"></div>
<div class="t" style="left:126.50px;width:600px;text-align:center;top:798.95px;font-size:7.5px;font-weight:400;">Pos market</div>
<div class="t" style="left:126.80px;width:600px;text-align:center;top:808.59px;font-size:17.5px;font-weight:400;">ВАФЛИ СЛАДОНЕЖ С</div>
<div class="t" style="left:135.00px;width:600px;text-align:center;top:830.79px;font-size:17.5px;font-weight:400;">ШОКОЛАДНЫМИ…</div>
<svg class="a" style="left:333.2px;top:860.6px" width="185.0" height="22.2" viewBox="0 0 123 1" preserveAspectRatio="none"><path d="M0 0h2v1h-2zM3 0h1v1h-1zM6 0h3v1h-3zM11 0h1v1h-1zM13 0h2v1h-2zM17 0h1v1h-1zM22 0h2v1h-2zM25 0h3v1h-3zM30 0h1v1h-1zM33 0h1v1h-1zM38 0h2v1h-2zM41 0h1v1h-1zM44 0h2v1h-2zM47 0h1v1h-1zM51 0h3v1h-3zM55 0h4v1h-4zM60 0h3v1h-3zM64 0h1v1h-1zM66 0h4v1h-4zM72 0h1v1h-1zM74 0h1v1h-1zM77 0h1v1h-1zM79 0h4v1h-4zM84 0h3v1h-3zM88 0h3v1h-3zM92 0h1v1h-1zM95 0h2v1h-2zM99 0h2v1h-2zM103 0h1v1h-1zM108 0h1v1h-1zM110 0h2v1h-2zM115 0h3v1h-3zM119 0h1v1h-1zM121 0h2v1h-2z" fill="#000"/></svg>
<div class="t" style="left:126.00px;width:600px;text-align:center;top:886.67px;font-size:12.2px;font-weight:700;transform:scale(1.0116,1.0000);transform-origin:50% 10.33px;">6921734977878</div>
<div class="t" style="left:-36.80px;width:600px;text-align:right;top:921.22px;font-size:12.5px;font-weight:400;transform:scale(1.0137,1.0671);transform-origin:100% 10.58px;">30.09.2025 10:54:27</div>
<div class="a lb" style="left:590.5px;top:798.3px;width:287px;height:137.5px;border:1px solid #d5d5d5"></div>
<div class="t" style="left:432.85px;width:600px;text-align:center;top:799.65px;font-size:20.5px;font-weight:700;transform:scale(1.0047,1.0000);transform-origin:50% 17.35px;">Pos market</div>
<div class="t" style="left:434.00px;width:600px;text-align:center;top:824.30px;font-size:15px;font-weight:400;">ВАФЛИ СЛАДОНЕЖ С ШОКОЛАДНЫМИ</div>
<div class="t" style="left:433.50px;width:600px;text-align:center;top:840.90px;font-size:15px;font-weight:400;">ШОКОЛАДНЫМИ</div>
<div class="t" style="left:430.75px;width:600px;text-align:center;top:856.71px;font-size:32px;font-weight:700;transform:scale(1.0313,1.0000);transform-origin:50% 27.09px;">175 000</div>
<svg class="a" style="left:641.5px;top:892.4px" width="184.4" height="17.8" viewBox="0 0 123 1" preserveAspectRatio="none"><path d="M0 0h2v1h-2zM3 0h1v1h-1zM6 0h3v1h-3zM11 0h1v1h-1zM13 0h2v1h-2zM17 0h1v1h-1zM22 0h2v1h-2zM25 0h3v1h-3zM30 0h1v1h-1zM33 0h1v1h-1zM38 0h2v1h-2zM41 0h1v1h-1zM44 0h2v1h-2zM47 0h1v1h-1zM51 0h3v1h-3zM55 0h4v1h-4zM60 0h3v1h-3zM64 0h1v1h-1zM66 0h4v1h-4zM72 0h1v1h-1zM74 0h1v1h-1zM77 0h1v1h-1zM79 0h4v1h-4zM84 0h3v1h-3zM88 0h3v1h-3zM92 0h1v1h-1zM95 0h2v1h-2zM99 0h2v1h-2zM103 0h1v1h-1zM108 0h1v1h-1zM110 0h2v1h-2zM115 0h3v1h-3zM119 0h1v1h-1zM121 0h2v1h-2z" fill="#000"/></svg>
<div class="t" style="left:434.30px;width:600px;text-align:center;top:913.07px;font-size:12.2px;font-weight:700;transform:scale(1.0232,1.0000);transform-origin:50% 10.33px;">6921734977878</div>
<div class="a lb" style="left:898px;top:798.3px;width:287px;height:137.5px;border:1px solid #d5d5d5"></div>
<svg class="a" style="left:910.7px;top:805.3px" width="154.1" height="20.3" viewBox="0 0 123 1" preserveAspectRatio="none"><path d="M0 0h2v1h-2zM3 0h1v1h-1zM6 0h3v1h-3zM11 0h1v1h-1zM13 0h2v1h-2zM17 0h1v1h-1zM22 0h2v1h-2zM25 0h3v1h-3zM30 0h1v1h-1zM33 0h1v1h-1zM38 0h2v1h-2zM41 0h1v1h-1zM44 0h2v1h-2zM47 0h1v1h-1zM51 0h3v1h-3zM55 0h4v1h-4zM60 0h3v1h-3zM64 0h1v1h-1zM66 0h4v1h-4zM72 0h1v1h-1zM74 0h1v1h-1zM77 0h1v1h-1zM79 0h4v1h-4zM84 0h3v1h-3zM88 0h3v1h-3zM92 0h1v1h-1zM95 0h2v1h-2zM99 0h2v1h-2zM103 0h1v1h-1zM108 0h1v1h-1zM110 0h2v1h-2zM115 0h3v1h-3zM119 0h1v1h-1zM121 0h2v1h-2z" fill="#000"/></svg>
<div class="t" style="left:689.05px;width:600px;text-align:center;top:827.87px;font-size:12.2px;font-weight:700;transform:scale(1.0173,1.0000);transform-origin:50% 10.33px;">6921734977878</div>
<div class="t" style="left:837.10px;width:600px;text-align:center;top:800.65px;font-size:20.5px;font-weight:700;">175 000</div>
<svg class="a" style="left:0;top:0;overflow:visible" width="1" height="1"><line x1="1089.6" y1="822.7" x2="1177.7" y2="799.5" stroke="#000" stroke-width="2.6"/></svg>
<div class="t" style="left:708.80px;width:600px;text-align:center;top:840.70px;font-size:71px;font-weight:700;transform:scale(1.0536,1.0311);transform-origin:50% 60.10px;">175</div>
<div class="t" style="left:803.80px;width:600px;text-align:center;top:846.24px;font-size:25px;font-weight:700;transform:scale(1.0331,1.0000);transform-origin:50% 21.16px;">So`m</div>
<div class="t" style="left:804.10px;width:600px;text-align:center;top:875.48px;font-size:24px;font-weight:700;transform:scale(1.0794,1.0019);transform-origin:50% 20.32px;">000</div>
<div class="t" style="left:741.20px;width:600px;text-align:center;top:906.70px;font-size:15px;font-weight:400;">ВАФЛИ СЛАДОНЕЖ С ШОКОЛАДНЫМИ</div>
<div class="t" style="left:577.70px;width:600px;text-align:right;top:921.22px;font-size:12.5px;font-weight:400;transform:scale(1.0001,1.0671);transform-origin:100% 10.58px;">30.09.2025 10:54:27</div>
<div class="a lb" style="left:1205px;top:798.3px;width:288px;height:137.5px;border:1px solid #d5d5d5"></div>
<div class="t" style="left:1216.00px;top:801.04px;font-size:12px;font-weight:400;transform:scale(1.0400,1.0000);transform-origin:0 10.16px;">PLU:</div>
<div class="t" style="left:1049.00px;width:600px;text-align:center;top:799.69px;font-size:17.5px;font-weight:400;">ВАФЛИ СЛАДОНЕЖ С</div>
<div class="t" style="left:1058.00px;width:600px;text-align:center;top:822.19px;font-size:17.5px;font-weight:400;">ШОКОЛАДНЫМИ…</div>
<div class="t" style="left:1112.6px;width:200px;text-align:center;top:860.8px;font-size:12.5px;line-height:12.5px;transform:rotate(-90deg)">Pos market</div>
<div class="t" style="left:1069.45px;width:600px;text-align:center;top:850.13px;font-size:36px;font-weight:700;transform:scale(1.0244,1.0000);transform-origin:50% 30.47px;">175 000 So`m</div>
<svg class="a" style="left:1231.10px;top:903.90px" width="50.24" height="9.98" viewBox="20 20 151 30"><rect x="20.6" y="20.6" width="29.8" height="28.8" rx="1.5" fill="#f6f6f6" stroke="#e4e4e4" stroke-width="0.9"/><path d="M24.6 26H31A9.1 9.1 0 0 1 31 44.2H24.6z M28.9 30V40.2H31A5.1 5.1 0 0 0 31 30z" fill="#0a2d45" fill-rule="evenodd"/><path d="M38.6 27.9H43a.9.9 0 0 1 .9.9V32.8H47.1a.9.9 0 0 1 .9.9V37.9a.9.9 0 0 1-.9.9H43.9V43.8a.9.9 0 0 1-.9.9H38.6a.9.9 0 0 1-.9-.9V38.8H34.2a.9.9 0 0 1-.9-.9V33.7a.9.9 0 0 1 .9-.9H37.7V28.8a.9.9 0 0 1 .9-.9z" fill="url(#lg)" stroke="#f6f6f6" stroke-width="0.7"/><g fill="#0b2e47" fill-rule="evenodd"><rect x="59.1" y="26.1" width="4.7" height="18.5"/><rect x="66.8" y="33" width="5.3" height="4.7"/><path d="M75 26.1H82.6A9.3 9.25 0 0 1 82.6 44.6H75z M79.2 29.9V40.8H82.4A5.5 5.45 0 0 0 82.4 29.9z"/><path d="M103.45 25.5a9.35 9.6 0 1 1 0 19.2a9.35 9.6 0 1 1 0-19.2z M103.45 29.6a5.25 5.5 0 1 0 0 11a5.25 5.5 0 1 0 0-11z"/><path d="M115.3 26.1H119.7V34.6L127.5 26.1H132.4L124.3 34.3L132.9 44.6H127.6L121.4 37.1L119.7 38.9V44.6H115.3z"/><path d="M141.55 25.5a9.35 9.6 0 1 1 0 19.2a9.35 9.6 0 1 1 0-19.2z M141.55 29.6a5.25 5.5 0 1 0 0 11a5.25 5.5 0 1 0 0-11z"/><path d="M153.2 26.1H157L165.6 37V26.1H170V44.6H166.2L157.6 33.7V44.6H153.2z"/></g></svg>
<div class="t" style="left:884.40px;width:600px;text-align:right;top:921.22px;font-size:12.5px;font-weight:400;transform:scale(1.0001,1.0671);transform-origin:100% 10.58px;">30.09.2025 10:54:27</div>
<div class="a lb" style="left:283px;top:988.6px;width:189px;height:140px;border:1px solid #d5d5d5"></div>
<div class="t" style="left:77.60px;width:600px;text-align:center;top:989.65px;font-size:7.5px;font-weight:400;">Pos market</div>
<div class="t" style="left:77.80px;width:600px;text-align:center;top:999.59px;font-size:17.5px;font-weight:400;">ВАФЛИ СЛАДОНЕЖ С</div>
<div class="t" style="left:86.40px;width:600px;text-align:center;top:1020.29px;font-size:17.5px;font-weight:400;">ШОКОЛАДНЫМИ…</div>
<div class="t" style="left:76.90px;width:600px;text-align:center;top:1036.05px;font-size:29px;font-weight:700;transform:scale(1.0220,1.0000);transform-origin:50% 24.55px;">175 000 So`m</div>
<svg class="a" style="left:300.0px;top:1069.0px" width="155.0" height="16.0" viewBox="0 0 123 1" preserveAspectRatio="none"><path d="M0 0h2v1h-2zM3 0h1v1h-1zM6 0h3v1h-3zM11 0h1v1h-1zM13 0h2v1h-2zM17 0h1v1h-1zM22 0h2v1h-2zM25 0h3v1h-3zM30 0h1v1h-1zM33 0h1v1h-1zM38 0h2v1h-2zM41 0h1v1h-1zM44 0h2v1h-2zM47 0h1v1h-1zM51 0h3v1h-3zM55 0h4v1h-4zM60 0h3v1h-3zM64 0h1v1h-1zM66 0h4v1h-4zM72 0h1v1h-1zM74 0h1v1h-1zM77 0h1v1h-1zM79 0h4v1h-4zM84 0h3v1h-3zM88 0h3v1h-3zM92 0h1v1h-1zM95 0h2v1h-2zM99 0h2v1h-2zM103 0h1v1h-1zM108 0h1v1h-1zM110 0h2v1h-2zM115 0h3v1h-3zM119 0h1v1h-1zM121 0h2v1h-2z" fill="#000"/></svg>
<div class="a lb" style="left:493px;top:988.6px;width:189px;height:140px;border:1px solid #d5d5d5"></div>
<div class="t" style="left:287.60px;width:600px;text-align:center;top:989.65px;font-size:7.5px;font-weight:400;">Pos market</div>
<div class="t" style="left:287.80px;width:600px;text-align:center;top:999.59px;font-size:17.5px;font-weight:400;">ВАФЛИ СЛАДОНЕЖ С</div>
<div class="t" style="left:296.40px;width:600px;text-align:center;top:1020.29px;font-size:17.5px;font-weight:400;">ШОКОЛАДНЫМИ…</div>
<div class="t" style="left:287.90px;width:600px;text-align:center;top:1052.45px;font-size:29px;font-weight:700;">175 000 So`m</div>
<div class="a lb" style="left:703px;top:988.6px;width:189px;height:140px;border:1px solid #d5d5d5"></div>
<div class="t" style="left:497.60px;width:600px;text-align:center;top:989.65px;font-size:7.5px;font-weight:400;">Pos market</div>
<div class="t" style="left:497.80px;width:600px;text-align:center;top:999.59px;font-size:17.5px;font-weight:400;">ВАФЛИ СЛАДОНЕЖ С</div>
<div class="t" style="left:506.40px;width:600px;text-align:center;top:1020.29px;font-size:17.5px;font-weight:400;">ШОКОЛАДНЫМИ…</div>
<svg class="a" style="left:720.3px;top:1056.7px" width="154.1" height="23.3" viewBox="0 0 123 1" preserveAspectRatio="none"><path d="M0 0h2v1h-2zM3 0h1v1h-1zM6 0h3v1h-3zM11 0h1v1h-1zM13 0h2v1h-2zM17 0h1v1h-1zM22 0h2v1h-2zM25 0h3v1h-3zM30 0h1v1h-1zM33 0h1v1h-1zM38 0h2v1h-2zM41 0h1v1h-1zM44 0h2v1h-2zM47 0h1v1h-1zM51 0h3v1h-3zM55 0h4v1h-4zM60 0h3v1h-3zM64 0h1v1h-1zM66 0h4v1h-4zM72 0h1v1h-1zM74 0h1v1h-1zM77 0h1v1h-1zM79 0h4v1h-4zM84 0h3v1h-3zM88 0h3v1h-3zM92 0h1v1h-1zM95 0h2v1h-2zM99 0h2v1h-2zM103 0h1v1h-1zM108 0h1v1h-1zM110 0h2v1h-2zM115 0h3v1h-3zM119 0h1v1h-1zM121 0h2v1h-2z" fill="#000"/></svg></div><!--/labels-->
</div>

<div id="pscroll" class="a"></div>
<div id="pthumb" class="a"></div>
</body></html>
